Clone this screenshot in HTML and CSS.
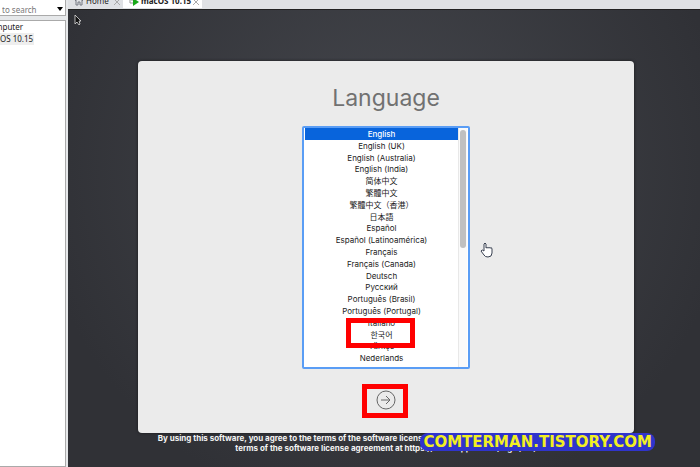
FILE: index.html
```html
<!DOCTYPE html>
<html lang="en">
<head>
<meta charset="utf-8">
<title>macOS 10.15</title>
<link rel="stylesheet" href="styles.css">
</head>
<body>
<aside class="library">
  <div class="search"><input type="text" placeholder="to search" aria-label="Type here to search"><button type="button" aria-label="Search options"><svg width="6" height="4" viewBox="0 0 6 4"><path d="M0 0h6L3 4z"/></svg></button></div>
  <nav class="tree"><a class="root" href="#computer">mputer</a><a class="current" href="#macos">OS 10.15</a></nav>
</aside>
<main class="workspace">
  <nav class="tabs">
    <a class="tab" href="#home"><svg width="10" height="10" viewBox="0 0 10 10"><path d="M1 5l4-4 4 4M2 4v5h2V6h2v3h2V4" fill="none" stroke="#777b83"/></svg><span>Home</span><svg class="close" width="6" height="6" viewBox="0 0 6 6"><path d="M0 0l6 6M6 0L0 6" stroke="#aaa" fill="none"/></svg></a>
    <a class="tab active" href="#macos"><svg width="10" height="10" viewBox="0 0 10 10"><path d="M1 1v6h4M3 0v5" fill="none" stroke="#999"/><path d="M4 2l6 4-6 4z" fill="#18a818"/></svg><span>macOS 10.15</span><svg class="close" width="6" height="6" viewBox="0 0 6 6"><path d="M0 0l6 6M6 0L0 6" stroke="#aaa" fill="none"/></svg></a>
  </nav>
  <div class="screen">
    <svg class="arrow-cursor" width="8" height="12" viewBox="0 0 8 12"><path d="M1 1v9l2-2 2 3 1-1-1-3h2z" fill="#111" stroke="#ddd" stroke-width=".8"/></svg>
    <form class="installer">
      <h1>Language</h1>
      <div class="listbox">
        <div class="options" role="radiogroup" aria-label="Language">
          <label><input type="radio" name="lang" checked>English</label>
          <label><input type="radio" name="lang">English (UK)</label>
          <label><input type="radio" name="lang">English (Australia)</label>
          <label><input type="radio" name="lang">English (India)</label>
          <label lang="zh-Hans"><input type="radio" name="lang">简体中文</label>
          <label lang="zh-Hant"><input type="radio" name="lang">繁體中文</label>
          <label lang="zh-Hant"><input type="radio" name="lang">繁體中文（香港）</label>
          <label lang="ja"><input type="radio" name="lang">日本語</label>
          <label><input type="radio" name="lang">Español</label>
          <label><input type="radio" name="lang">Español (Latinoamérica)</label>
          <label><input type="radio" name="lang">Français</label>
          <label><input type="radio" name="lang">Français (Canada)</label>
          <label><input type="radio" name="lang">Deutsch</label>
          <label><input type="radio" name="lang">Русский</label>
          <label><input type="radio" name="lang">Português (Brasil)</label>
          <label><input type="radio" name="lang">Português (Portugal)</label>
          <label><input type="radio" name="lang">Italiano</label>
          <label class="marked" lang="ko"><input type="radio" name="lang">한국어</label>
          <label><input type="radio" name="lang">Türkçe</label>
          <label><input type="radio" name="lang">Nederlands</label>
        </div>
        <div class="track"><div class="thumb"></div></div>
      </div>
      <button class="next marked" type="button" aria-label="Continue"><svg width="20" height="20" viewBox="0 0 20 20"><circle cx="10" cy="10" r="9"/><path d="M5 10h9M10 6l4 4-4 4"/></svg></button>
      <svg class="hand-cursor" width="14" height="16" viewBox="0 0 14 16"><path d="M4 9V2q1-2 2 0v4q1-1 2 0 1-1 2 0 2-1 2 1v4q0 4-4 4-3 0-4-2L1 9q1-2 3 0z" fill="#fff" stroke="#384050"/></svg>
    </form>
    <footer class="legal">
      <p>By using this software, you agree to the terms of the software license agreement. You can view and print the full copy</p>
      <p>terms of the software license agreement at https://www.apple.com/legal/sla/</p>
      <span class="watermark">COMTERMAN.TISTORY.COM</span>
    </footer>
  </div>
</main>
</body>
</html>
```
FILE: styles.css
```css
* { box-sizing: border-box; }
body { margin: 0; min-height: 100vh; display: flex; background: #e6e8ea; font-family: Inter, "Noto Sans CJK SC", sans-serif; font-size: 8px; overflow: hidden; }
a { color: #222; text-decoration: none; }
.library { width: 68px; flex: none; display: flex; flex-direction: column; gap: 4px; padding-right: 2px; font-family: "Noto Sans", sans-serif; }
.search { display: flex; align-items: center; height: 16px; padding-top: 3px; border: 1px solid #aaa; border-left: 0; border-top: 0; background: #fff; }
.search input { width: 54px; min-width: 0; flex: 1; padding: 0 0 0 2px; border: 0; background: none; font: inherit; }
.search input::placeholder { color: #777; }
.search button { display: flex; padding: 0 2px; border: 0; background: none; }
.tree { flex: 1; display: flex; flex-direction: column; align-items: flex-start; border: 1px solid #aaa; border-left: 0; background: #fff; line-height: 12px; overflow: hidden; }
.tree .root { margin-left: -5px; }
.tree .current { padding-right: 1px; background: #eee; }
.workspace { flex: 1; min-width: 0; display: flex; flex-direction: column; }
.tabs { height: 9px; display: flex; overflow: hidden; background: #dfe1e4; font-family: "Noto Sans", sans-serif; line-height: 12px; white-space: nowrap; }
.tab { display: flex; align-items: flex-start; gap: 2px; width: 55px; height: 8px; padding-left: 6px; }
.tab span { margin-top: -5px; }
.tab svg { margin-top: -4px; flex: none; }
.tab .close { margin: -1px 3px 0 auto; }
.tab.active { width: 79px; background: #fff; font-weight: 700; }
.screen { position: relative; flex: 1; padding: 51px 66px 0 70px; background: radial-gradient(circle at 50% 35%, #45474d, #303136 80%); border-top: 1px solid #222; }
.arrow-cursor { position: absolute; left: 6px; top: 4px; }
.installer { position: relative; display: flex; flex-direction: column; align-items: center; height: 372px; padding-top: 22px; border-radius: 4px; background: #ebebeb; box-shadow: 0 0 3px #17181b; }
h1 { margin: 0 0 13px; color: #717171; font-size: 23px; line-height: 30px; font-weight: 400; }
.listbox { display: flex; width: 168px; height: 243px; padding: 0 1px; border: 2px solid #5a9df5; border-radius: 2px; background: #fff; }
.options { display: grid; grid-template-rows: repeat(20, 1fr); width: 153px; height: 236px; color: #222; line-height: 12px; text-align: center; }
.options label { position: relative; min-height: 0; }
.options input { position: absolute; appearance: none; margin: 0; width: 100%; inset: 0; }
.options label:has(:checked) { background: #0864dc; color: #fff; font-weight: 500; }
.track { flex: 1; padding: 2px 1px; background: #fafafa; border-left: 1px solid #e8e8e8; }
.thumb { width: 6px; height: 118px; border-radius: 3px; background: #c0c0c0; }
.marked::after { content: ""; position: absolute; box-sizing: border-box; border: 5px solid #f00; }
.options .marked::after { z-index: 1; left: 41px; top: -11px; width: 69px; height: 30px; }
.next { position: relative; display: flex; margin-top: 21px; padding: 0; border: 0; background: none; }
.next::after { inset: -6px -12px -8px -14px; }
.next svg { fill: none; stroke: #666; }
.hand-cursor { position: absolute; left: 69%; top: 181px; }
.legal { position: relative; color: #f4f4f4; line-height: 10px; font-weight: 700; text-align: center; white-space: nowrap; }
.legal p { margin: 0; }
.watermark { position: absolute; right: -21px; top: 0; padding: 0 3px; border-radius: 8px; background: #3034cc; color: #f2ef22; font: bold 15px/18px "DejaVu Sans", sans-serif; }
```
